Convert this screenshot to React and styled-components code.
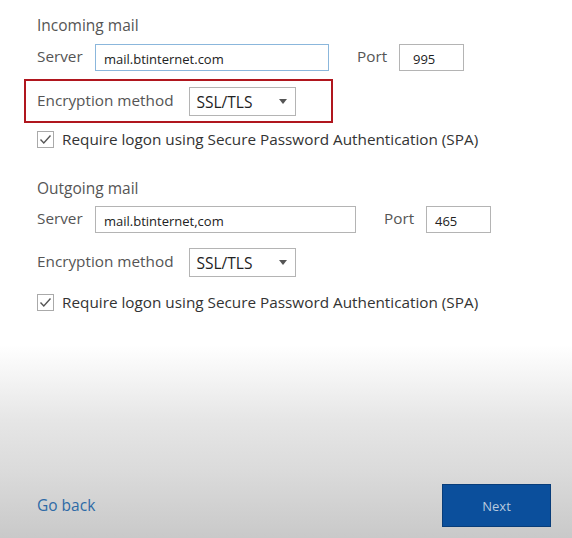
import React from 'react';
import styled, { createGlobalStyle } from 'styled-components';

const GlobalStyle = createGlobalStyle`
  * {
    margin: 0;
    padding: 0;
    box-sizing: border-box;
  }
  body {
    font-family: "Open Sans", "Noto Sans", Arial, sans-serif;
    color: #444;
  }
`;

const Page = styled.div`
  width: 572px;
  height: 538px;
  display: flex;
  flex-direction: column;
  background: linear-gradient(
    to bottom,
    #ffffff 0px,
    #ffffff 345px,
    #e6e6e6 420px,
    #dbdbdb 470px,
    #c9c9c9 538px
  );
  overflow: hidden;
`;

const Form = styled.div`
  padding: 15px 0 0 37px;
  display: flex;
  flex-direction: column;
`;

const SectionTitle = styled.div`
  font-size: 15.5px;
  color: #555;
  line-height: 20px;
  margin-top: ${(p) => p.$top || 0}px;
`;

const Row = styled.div`
  display: flex;
  align-items: center;
  height: 27px;
  margin-top: ${(p) => p.$top || 0}px;
`;

const Label = styled.span`
  font-size: 15.3px;
  color: #555;
  width: ${(p) => (p.$w ? `${p.$w}px` : 'auto')};
  margin-left: ${(p) => p.$left || 0}px;
  margin-top: -3px;
  flex-shrink: 0;
`;

const TextBox = styled.div`
  width: ${(p) => p.$w}px;
  height: 27px;
  border: 1px solid ${(p) => (p.$focused ? '#8bb7dc' : '#b4b4b4')};
  background: #fff;
  font-size: 13px;
  color: #222;
  display: flex;
  align-items: center;
  padding-left: ${(p) => p.$pad ?? 8}px;
  padding-top: 2px;
`;

const Highlight = styled.div`
  display: flex;
  align-items: center;
  width: 309px;
  height: 44px;
  margin: 8px 0 0 -13px;
  padding-left: 11px;
  border: 2px solid #b0161e;
`;

const EncRow = styled.div`
  display: flex;
  align-items: center;
  height: 30px;
  margin-top: ${(p) => p.$top || 0}px;
`;

const Select = styled.div`
  width: 107px;
  height: 29px;
  margin-left: 15px;
  border: 1px solid #b4b4b4;
  background: #fff;
  display: flex;
  align-items: center;
  justify-content: space-between;
  padding: 2px 8px 0 7px;
  font-size: 15.5px;
  color: #222;
`;

const Caret = styled.span`
  width: 0;
  height: 0;
  border-left: 4px solid transparent;
  border-right: 4px solid transparent;
  border-top: 5px solid #555;
  margin-top: -2px;
`;

const CheckRow = styled.label`
  display: flex;
  align-items: center;
  gap: 8px;
  font-size: 15.3px;
  color: #333;
  margin-top: ${(p) => p.$top || 0}px;
`;

const Box = styled.span`
  width: 17px;
  height: 17px;
  border: 1px solid #aaa;
  background: #fff;
  display: flex;
  align-items: center;
  justify-content: center;
`;

const Footer = styled.div`
  margin-top: auto;
  display: flex;
  justify-content: space-between;
  align-items: center;
  padding: 0 21px 11px 37px;
`;

const BackLink = styled.a`
  font-size: 15.5px;
  color: #2d6aa6;
  text-decoration: none;
  margin-top: -2px;
`;

const NextButton = styled.button`
  width: 109px;
  height: 43px;
  background: #0b4f9c;
  border: 1px solid #083d7a;
  color: #b7c9df;
  font-family: inherit;
  font-size: 13px;
`;

function Check() {
  return (
    <Box>
      <svg width="13" height="11" viewBox="0 0 13 11">
        <path d="M1.5 5.5 L4.8 9 L11.5 1.5" fill="none" stroke="#555" strokeWidth="1.4" />
      </svg>
    </Box>
  );
}

export default function App() {
  return (
    <Page>
      <GlobalStyle />
      <Form>
        <SectionTitle>Incoming mail</SectionTitle>
        <Row $top={9}>
          <Label $w={58}>Server</Label>
          <TextBox $w={234} $focused>mail.btinternet.com</TextBox>
          <Label $w={42} $left={28}>Port</Label>
          <TextBox $w={65} $pad={13}>995</TextBox>
        </Row>
        <Highlight>
          <Label>Encryption method</Label>
          <Select>
            SSL/TLS
            <Caret />
          </Select>
        </Highlight>
        <CheckRow $top={6}>
          <Check />
          Require logon using Secure Password Authentication (SPA)
        </CheckRow>

        <SectionTitle $top={29}>Outgoing mail</SectionTitle>
        <Row $top={8}>
          <Label $w={58}>Server</Label>
          <TextBox $w={261}>mail.btinternet,com</TextBox>
          <Label $w={42} $left={28}>Port</Label>
          <TextBox $w={65}>465</TextBox>
        </Row>
        <EncRow $top={14}>
          <Label>Encryption method</Label>
          <Select>
            SSL/TLS
            <Caret />
          </Select>
        </EncRow>
        <CheckRow $top={15}>
          <Check />
          Require logon using Secure Password Authentication (SPA)
        </CheckRow>
      </Form>
      <Footer>
        <BackLink href="#">Go back</BackLink>
        <NextButton>Next</NextButton>
      </Footer>
    </Page>
  );
}
